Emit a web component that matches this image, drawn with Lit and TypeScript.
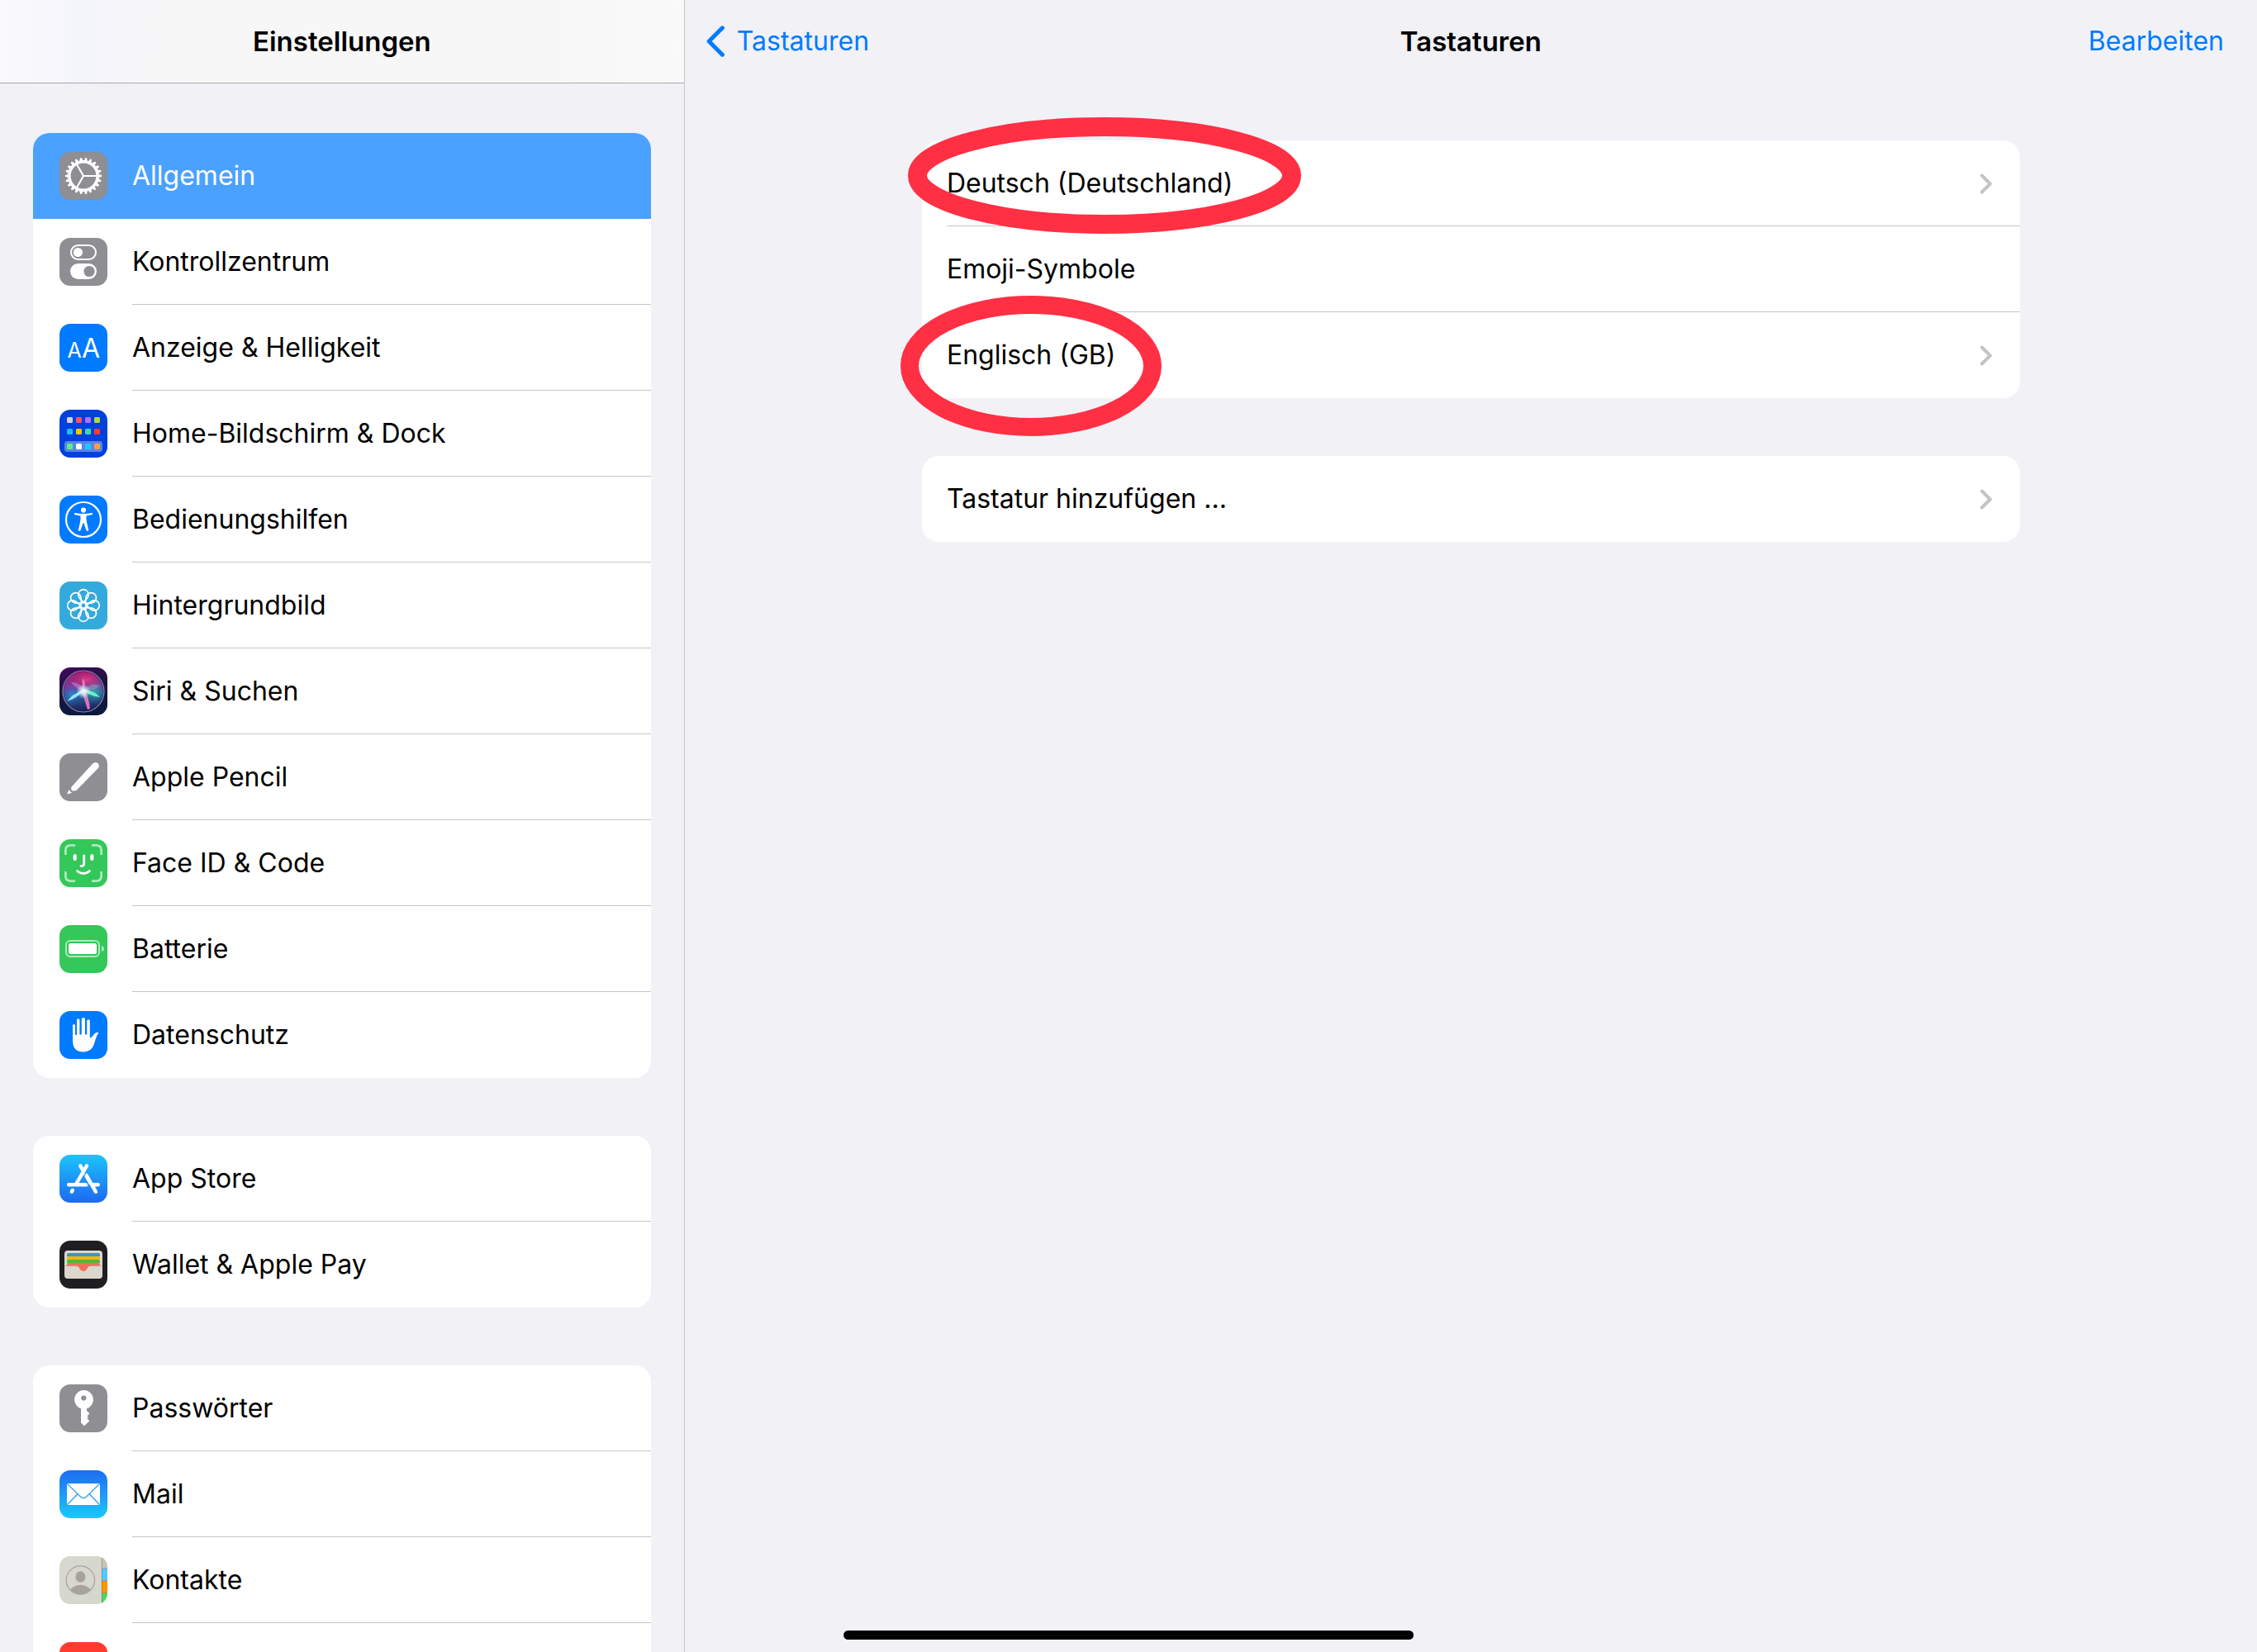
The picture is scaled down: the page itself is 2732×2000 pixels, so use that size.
import { LitElement, html, css, svg, nothing, type TemplateResult } from "lit";
import { customElement, property } from "lit/decorators.js";

type IconName =
  | "general" | "control" | "display" | "home" | "access" | "wallpaper" | "siri"
  | "pencil" | "face" | "battery" | "privacy" | "store" | "wallet" | "key"
  | "mail" | "contacts" | "red";

interface Item {
  icon: IconName;
  label?: string;
  selected?: boolean;
}

const GRAY = "#8e8e93";
const BLUE = "#007aff";
const GREEN = "#34c759";

const GROUPS: Item[][] = [
  [
    { icon: "general", label: "Allgemein", selected: true },
    { icon: "control", label: "Kontrollzentrum" },
    { icon: "display", label: "Anzeige & Helligkeit" },
    { icon: "home", label: "Home-Bildschirm & Dock" },
    { icon: "access", label: "Bedienungshilfen" },
    { icon: "wallpaper", label: "Hintergrundbild" },
    { icon: "siri", label: "Siri & Suchen" },
    { icon: "pencil", label: "Apple Pencil" },
    { icon: "face", label: "Face ID & Code" },
    { icon: "battery", label: "Batterie" },
    { icon: "privacy", label: "Datenschutz" },
  ],
  [
    { icon: "store", label: "App Store" },
    { icon: "wallet", label: "Wallet & Apple Pay" },
  ],
  [
    { icon: "key", label: "Passwörter" },
    { icon: "mail", label: "Mail" },
    { icon: "contacts", label: "Kontakte" },
    { icon: "red" },
  ],
];

const steps = (n: number) => Array.from({ length: n }, (_, i) => (i * 360) / n);
const tile = (fill: string) => svg`<rect width="58" height="58" fill=${fill} />`;

const HOME_DOTS = [
  ["#d1d1d6", "#ff4f64", "#b070ff", "#aedb38"],
  ["#1cbcff", "#ffc700", "#3dd9ae", "#ff3b30"],
  ["#5ef17a", "#ffffff", "#20c8ff", "#ff9d42"],
];
const HOME_ROWS = [9, 23, 41];

const ICONS: Record<IconName, () => TemplateResult> = {
  general: () => svg`${tile(GRAY)}
    <g fill="#fff">${steps(22).map(
      (a) => svg`<path d="M46 26.6 L50.8 27.9 Q51.8 29 50.8 30.1 L46 31.4 Z" transform="rotate(${a} 29 29)" />`
    )}</g>
    <g fill="none" stroke="#fff">
      <circle cx="29" cy="29" r="17.2" stroke-width="3.6" />
      ${[0, 120, 240].map((a) => svg`<path d="M29 29H46" stroke-width="2.2" transform="rotate(${a} 29 29)" />`)}
    </g>`,
  control: () => svg`${tile(GRAY)}
    <rect x="14" y="9" width="30" height="17" rx="8.5" fill="none" stroke="#fff" stroke-width="2" />
    <circle cx="22.4" cy="17.5" r="5.6" fill="#fff" />
    <rect x="13" y="31" width="32" height="19" rx="9.5" fill="#fff" />
    <circle cx="36" cy="40.5" r="6.6" fill=${GRAY} />`,
  display: () => svg`${tile(BLUE)}
    <g fill="#fff" text-anchor="middle" font-weight="400">
      <text x="18" y="41" font-size="25">A</text>
      <text x="38" y="41" font-size="32">A</text>
    </g>`,
  home: () => svg`${tile("#0040dd")}
    <rect x="6" y="38" width="46" height="13" rx="3.5" fill="#5a84ea" />
    ${HOME_DOTS.map((row, r) =>
      row.map((c, i) => svg`<rect x=${9 + i * 11} y=${HOME_ROWS[r]} width="7" height="7" rx="1.5" fill=${c} />`)
    )}`,
  access: () => svg`${tile(BLUE)}
    <circle cx="29" cy="29" r="21" fill="none" stroke="#fff" stroke-width="2.2" />
    <circle cx="29" cy="17.6" r="3.1" fill="#fff" />
    <path fill="#fff" d="M18.8 21 Q29 23.2 39.2 21 Q40.4 21.2 40 22.6 Q39.8 23 39 23.2 L32.6 24.5 Q32.2 28.5 33 32 L35.2 41.4 Q35 43.4 33.2 42.8 L32.6 42.2 L29.3 33 H28.7 L25.4 42.2 Q24.4 43.4 22.9 42.2 L22.8 41.4 L25 32 Q25.8 28.5 25.4 24.5 L19 23.2 Q17.4 22.6 18 21.2 Z" />`,
  wallpaper: () => svg`${tile("#34aadc")}
    <g fill="none" stroke="#fff" stroke-width="1.7">
      <circle cx="29" cy="29" r="3.3" />
      ${steps(8).map(
        (a) => svg`<path transform="rotate(${a} 29 29)" d="M29 25.7 C27.6 22.6 22.8 20.4 22.8 15.9 A6.2 6.2 0 0 1 35.2 15.9 C35.2 20.4 30.4 22.6 29 25.7" />`
      )}
    </g>`,
  siri: () => svg`
    <defs>
      <linearGradient id="sbg" x1="0" y1="0" x2="0.3" y2="1">
        <stop offset="0" stop-color="#42085c" /><stop offset="0.5" stop-color="#1d1440" /><stop offset="1" stop-color="#0b1a3c" />
      </linearGradient>
      <linearGradient id="sorb" x1="0.4" y1="0" x2="0.5" y2="1">
        <stop offset="0" stop-color="#a81c6c" /><stop offset="0.4" stop-color="#7c3c96" />
        <stop offset="0.6" stop-color="#2a5e98" /><stop offset="1" stop-color="#1a1850" />
      </linearGradient>
      <radialGradient id="steal"><stop offset="0" stop-color="#2fc8b4" /><stop offset="1" stop-color="#1a8f9a" stop-opacity="0" /></radialGradient>
      <radialGradient id="sblue"><stop offset="0" stop-color="#3590d8" /><stop offset="1" stop-color="#2450b8" stop-opacity="0" /></radialGradient>
      <radialGradient id="spink"><stop offset="0" stop-color="#f0408c" /><stop offset="1" stop-color="#e0206c" stop-opacity="0" /></radialGradient>
      <radialGradient id="score"><stop offset="0" stop-color="#fff" /><stop offset="0.35" stop-color="#e8fbff" stop-opacity="0.8" /><stop offset="1" stop-color="#bff" stop-opacity="0" /></radialGradient>
      <clipPath id="sclip"><circle cx="29" cy="29" r="24" /></clipPath>
    </defs>
    <rect width="58" height="58" fill="url(#sbg)" />
    <g clip-path="url(#sclip)">
      <rect x="4" y="4" width="50" height="50" fill="url(#sorb)" />
      <ellipse cx="42" cy="30" rx="15" ry="15" fill="url(#steal)" opacity="0.7" />
      <ellipse cx="15" cy="33" rx="14" ry="14" fill="url(#sblue)" opacity="0.85" />
      <ellipse cx="33" cy="15" rx="17" ry="11" fill="url(#spink)" opacity="0.8" />
      <path d="M14 18 Q25 17 30 28 Q20 27 14 18Z" fill="#d78be0" opacity="0.5" />
      <path d="M49 22 Q38 17 30 28 Q42 29 49 22Z" fill="#b79ac8" opacity="0.45" />
      <path d="M29 28 Q33 18 28 13 Q27 22 29 28Z" fill="#ffb0d8" opacity="0.6" />
      <path d="M30 27 Q22 37 9 41 Q17 31 30 27Z" fill="#8feaff" />
      <path d="M28 27 Q41 27 49 36 Q37 35 28 27Z" fill="#6ff0c4" />
      <path d="M27 29 Q31 41 34 51 L37 50 Q36 38 31 29Z" fill="#f07ac8" opacity="0.9" />
      <circle cx="29" cy="29" r="9" fill="url(#score)" />
    </g>
    <circle cx="29" cy="29" r="25" fill="none" stroke="#a9a4cf" stroke-width="1.2" opacity="0.8" />`,
  pencil: () => svg`${tile(GRAY)}
    <path fill="#fff" d="M14.2 41 L40.2 12.6 Q43.5 9.6 46.6 12.2 Q49.3 15.3 46.4 18.6 L20.4 45 L15.6 45.8 Q13.6 44 14.2 41Z" />
    <path fill="#fff" d="M11.6 43.8 Q12.6 46.8 15.2 47.4 L10.4 49.4 Q9.4 49.2 9.6 48.2Z" />
    <path d="M12.6 43 Q13.4 45.8 16.2 46.6" fill="none" stroke=${GRAY} stroke-width="1.2" />`,
  face: () => svg`${tile(GREEN)}
    <path d="M7.4 19V13.4Q7.4 7.4 13.4 7.4H19 M39 7.4H44.6Q50.6 7.4 50.6 13.4V19 M50.6 39V44.6Q50.6 50.6 44.6 50.6H39 M19 50.6H13.4Q7.4 50.6 7.4 44.6V39"
      fill="none" stroke="#fff" stroke-width="2.8" opacity="0.6" />
    <rect x="16.6" y="18" width="4.2" height="8" rx="2.1" fill="#fff" />
    <rect x="37.2" y="18" width="4.2" height="8" rx="2.1" fill="#fff" />
    <path d="M29.7 20V29.5Q29.7 32.4 26.8 32.4H26 M21.6 38.6Q29 44.4 36.4 38.6" fill="none" stroke="#fff" stroke-width="2.8" stroke-linecap="round" />`,
  battery: () => svg`${tile(GREEN)}
    <rect x="8" y="19" width="40" height="19" rx="5" fill="none" stroke="#fff" stroke-width="2" opacity="0.6" />
    <rect x="11" y="22" width="34" height="13" rx="2.5" fill="#fff" />
    <path d="M51 25Q54 26 54 28.5T51 32Z" fill="#fff" opacity="0.6" />`,
  privacy: () => svg`${tile(BLUE)}
    <path fill="#fff" d="M16 17.6Q16 16 17.5 16T19 17.6V29H21V11Q21 9.2 22.7 9.2T24.4 11V28.6H26.8V10Q26.8 8 28.9 8T31 10V28.6H33.2V12Q33.2 10.2 35 10.2T36.8 12V32.4Q38 32.8 39.4 31L42.4 27.4Q44.6 25.4 47.4 26.4Q45.4 29 44.4 32L42 39.4Q39 49.4 28.6 49.4Q16 49.4 16 36Z" />`,
  store: () => svg`
    <defs><linearGradient id="astore" x1="0" y1="0" x2="0" y2="1"><stop offset="0" stop-color="#1cc5fc" /><stop offset="1" stop-color="#1d68f1" /></linearGradient></defs>
    ${tile("url(#astore)")}
    <g stroke="#fff" stroke-width="4.4" stroke-linecap="round" fill="none">
      <path d="M25.2 13.4L28 18.2 M44 44.8L32.6 25 M46.8 36.3H41 M11.2 36.3H33 M33 13.4L20.4 35 M15.8 43L14.8 44.8" />
      <path d="M30.6 22.4L38 35" stroke-linecap="butt" />
    </g>
    <path d="M34.6 17.6L28.4 28.2 M32 32L36.2 39.4" stroke="#1c9bf8" stroke-width="1.1" fill="none" />`,
  wallet: () => svg`${tile("#1f1f21")}
    <rect x="6" y="12" width="46" height="34" rx="4" fill="#dbd7cc" />
    <path d="M9 19V17Q9 15 11 15H47Q49 15 49 17V19Z" fill="#4395b9" />
    <path d="M9 23V21Q9 19 11 19H47Q49 19 49 21V23Z" fill="#f0b31c" />
    <path d="M9 27V25Q9 23 11 23H47Q49 23 49 25V27Z" fill="#60b332" />
    <path d="M9 31V29Q9 27 11 27H47Q49 27 49 29V31H37Q35.4 31 34.4 32.4Q32 37 29 37T23.6 32.4Q22.6 31 21 31Z" fill="#f36d5b" />
    <path d="M6 30.6H21 M37 30.6H52" stroke="#b9a89c" stroke-width="0.8" />`,
  key: () => svg`${tile(GRAY)}
    <path fill="#fff" fill-rule="evenodd" d="M26 29.2A11.4 11.4 0 1 1 33 29.2V32L36.4 35.2L33.6 38.6L35 39.6L33.4 41.4L36.4 44.2L30 50.2L26 46.6Z M29.3 13.4A3.1 3.1 0 1 0 29.3 19.6A3.1 3.1 0 1 0 29.3 13.4Z" />`,
  mail: () => svg`
    <defs><linearGradient id="amail" x1="0" y1="0" x2="0" y2="1"><stop offset="0" stop-color="#1e6cf2" /><stop offset="1" stop-color="#1ac9fd" /></linearGradient></defs>
    ${tile("url(#amail)")}
    <rect x="9" y="16" width="40" height="26" rx="1" fill="#fff" />
    <path d="M9.4 16.4L25 31.6Q29 35.6 33 31.6L48.6 16.4 M9.4 41.6L21.6 29 M48.6 41.6L36.4 29" fill="none" stroke="#1f97f6" stroke-width="1.3" />`,
  contacts: () => svg`
    <defs><clipPath id="cclip"><circle cx="25.4" cy="29" r="17" /></clipPath></defs>
    ${tile("#d6d7cd")}
    <rect x="51" width="7" height="15" fill="#c6c3ba" />
    <rect x="51" y="15" width="7" height="15" fill="#5ac8fa" />
    <rect x="51" y="30" width="7" height="14.5" fill="#ff9500" />
    <rect x="51" y="44.5" width="7" height="14" fill="#4cd964" />
    <path d="M51.4 0V58 M51 15H58 M51 29.8H58 M51 44.5H58" stroke="#6e6a5c" stroke-width="0.8" opacity="0.6" />
    <g fill="#a9a29c">
      <circle cx="25.4" cy="29" r="17.2" fill="none" stroke="#a9a29c" stroke-width="1.2" />
      <ellipse cx="25.4" cy="25" rx="6" ry="6.8" />
      <ellipse cx="25.4" cy="44.6" rx="13.4" ry="9.8" clip-path="url(#cclip)" />
    </g>`,
  red: () => tile("#ff3b30"),
};

@customElement("settings-icon")
export class SettingsIcon extends LitElement {
  static styles = css`
    :host { display: block; width: 58px; height: 58px; flex: none; border-radius: 13px; overflow: hidden; }
    .glyph { display: block; width: 100%; height: 100%; }
  `;

  @property() name: IconName = "general";

  render() {
    return html`<svg class="glyph" viewBox="0 0 58 58" aria-hidden="true">${ICONS[this.name]()}</svg>`;
  }
}

@customElement("settings-sidebar")
export class SettingsSidebar extends LitElement {
  static styles = css`
    :host {
      display: flex; flex-direction: column; min-width: 0; overflow: hidden;
      box-sizing: border-box; border-right: 1px solid #c6c6c8;
    }
    .bar {
      display: flex; align-items: center; justify-content: center; flex: none;
      box-sizing: border-box; height: 101px; border-bottom: 1px solid #a9a9ac;
      background: linear-gradient(90deg, #fafafc 0, #f8f8fc 6%, #f4f4fc 12%, #f7f7f9 20%, #f7f7f7 40%, #f7f7f7 82%, #fafafb 100%);
    }
    .title { margin: 0; font-size: 33px; line-height: 40px; font-weight: 600; }
    .scroll { display: flex; flex-direction: column; gap: 70px; padding: 60px 40px 0; min-height: 0; }
    .group { flex: none; margin: 0; padding: 0; list-style: none; background: #fff; border-radius: 20px; overflow: hidden; }
    .row {
      display: flex; align-items: center; gap: 30px; height: 104px; padding-left: 32px;
      color: #000; text-decoration: none;
    }
    .text {
      display: flex; align-items: center; flex: 1; min-width: 0; height: 100%;
      box-sizing: border-box; border-bottom: 1px solid #c6c6c8; padding-top: 1px;
      white-space: nowrap;
    }
    .item:last-child .text, .selected .text { border-color: transparent; }
    .selected { background: #4ba1ff; color: #fff; }
  `;

  render() {
    return html`
      <header class="bar"><h1 class="title" id="title">Einstellungen</h1></header>
      <nav class="scroll" aria-labelledby="title">
        ${GROUPS.map(
          (group) => html`<ul class="group">
            ${group.map(
              (item) => html`<li class="item">
                ${item.label
                  ? html`<a
                      class="row ${item.selected ? "selected" : ""}"
                      href="#"
                      aria-current=${item.selected ? "page" : nothing}
                    >
                      <settings-icon name=${item.icon}></settings-icon>
                      <span class="text">${item.label}</span>
                    </a>`
                  : html`<div class="row"><settings-icon name=${item.icon}></settings-icon></div>`}
              </li>`
            )}
          </ul>`
        )}
      </nav>
    `;
  }
}

@customElement("keyboard-pane")
export class KeyboardPane extends LitElement {
  static styles = css`
    :host { display: flex; flex-direction: column; min-width: 0; }
    .bar {
      display: grid; grid-template-columns: 1fr auto 1fr; align-items: center;
      height: 100px; padding: 0 26px; line-height: 40px;
    }
    .back { display: flex; align-items: center; gap: 15px; justify-self: start; color: #007aff; text-decoration: none; }
    .back-icon { display: block; width: 22px; height: 38px; }
    .title { margin: 0; font-size: 33px; font-weight: 600; }
    .edit { justify-self: end; padding: 0 14px; border: 0; background: none; color: #007aff; font: inherit; }
    .lists {
      display: flex; flex-direction: column; gap: 70px;
      box-sizing: border-box; width: calc(100% - 80px); max-width: 1329px; margin: 70px auto 0;
    }
    .group { margin: 0; padding: 0; list-style: none; background: #fff; border-radius: 20px; }
    .item { position: relative; padding-left: 30px; }
    .row {
      display: flex; align-items: center; justify-content: space-between; box-sizing: border-box;
      height: 104px; padding: 1px 33px 0 0; border-bottom: 1px solid #c6c6c8;
      color: #000; text-decoration: none;
    }
    .item:last-child .row { border-color: transparent; }
    .chevron { display: block; width: 15px; height: 25px; flex: none; }
    .ring { position: absolute; z-index: 1; box-sizing: border-box; pointer-events: none; overflow: visible; }
    .ring-wide { left: -17px; top: -28px; width: 476px; height: 141px; }
    .ring-round { left: -26px; top: -20px; width: 316px; height: 170px; }
  `;

  private chevron = html`<svg class="chevron" viewBox="0 0 15 25" aria-hidden="true">
    <path d="M2 2.5L12 12.5L2 22.5" fill="none" stroke="#c4c4c7" stroke-width="4" stroke-linecap="round" stroke-linejoin="round" />
  </svg>`;

  private link(label: string) {
    return html`<a class="row" href="#"><span>${label}</span>${this.chevron}</a>`;
  }

  render() {
    return html`
      <header class="bar">
        <a class="back" href="#">
          <svg class="back-icon" viewBox="0 0 22 38" aria-hidden="true">
            <path d="M19.4 2.8L3.2 19L19.4 35.2" fill="none" stroke="#007aff" stroke-width="5" stroke-linecap="round" stroke-linejoin="round" />
          </svg>
          <span>Tastaturen</span>
        </a>
        <h2 class="title">Tastaturen</h2>
        <button class="edit" type="button">Bearbeiten</button>
      </header>
      <div class="lists">
        <ul class="group">
          <li class="item">
            ${this.link("Deutsch (Deutschland)")}
            <svg class="ring ring-wide" viewBox="0 0 476 141" aria-hidden="true">
              <ellipse cx="238" cy="70.5" rx="226.5" ry="59" fill="none" stroke="#ff3044" stroke-width="23" />
            </svg>
          </li>
          <li class="item"><div class="row">Emoji-Symbole</div></li>
          <li class="item">
            ${this.link("Englisch (GB)")}
            <svg class="ring ring-round" viewBox="0 0 316 170" aria-hidden="true">
              <ellipse cx="158" cy="85" rx="147" ry="74" fill="none" stroke="#ff3044" stroke-width="22" />
            </svg>
          </li>
        </ul>
        <ul class="group">
          <li class="item">${this.link("Tastatur hinzufügen ...")}</li>
        </ul>
      </div>
    `;
  }
}

@customElement("app-root")
export class AppRoot extends LitElement {
  static styles = css`
    :host {
      display: block; position: relative; height: 100vh; overflow: hidden;
      background: #f1f1f6; color: #000;
      font: 400 32px/40px Inter, "Liberation Sans", sans-serif;
    }
    .split { display: grid; grid-template-columns: minmax(360px, 27fr) 62fr; grid-template-rows: 100%; height: 100%; }
    .home-indicator {
      position: absolute; left: 50%; bottom: 15px; width: 25.25%; height: 11px;
      transform: translateX(-50%); border-radius: 6px; background: #000;
    }
  `;

  render() {
    return html`
      <div class="split">
        <settings-sidebar></settings-sidebar>
        <keyboard-pane></keyboard-pane>
      </div>
      <div class="home-indicator"></div>
    `;
  }
}
